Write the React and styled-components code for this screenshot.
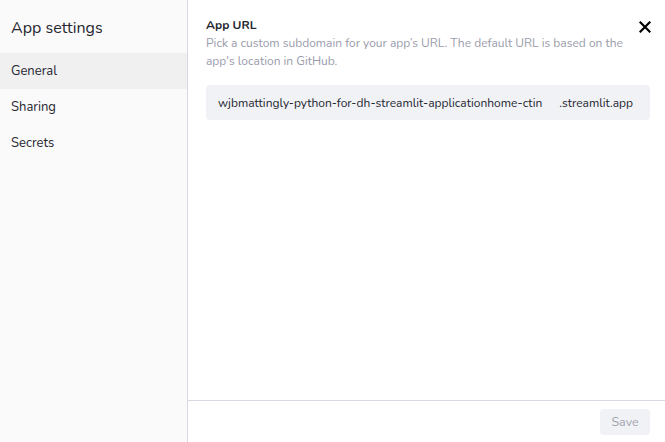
import React from "react";
import styled, { createGlobalStyle } from "styled-components";

const GlobalStyle = createGlobalStyle`
  html, body { margin: 0; padding: 0; background: #ffffff; }
  body { font-family: "Nunito", "Lato", "Open Sans", sans-serif; }
`;

const Shell = styled.div`
  display: flex;
  width: 665px;
  height: 442px;
  overflow: hidden;
`;

const Sidebar = styled.aside`
  width: 187px;
  flex-shrink: 0;
  background: #fafafa;
  border-right: 1px solid #d9d9e3;
  display: flex;
  flex-direction: column;
`;

const SideTitle = styled.div`
  font-size: 16px;
  color: #262730;
  padding: 17px 0 0 11px;
  height: 36px;
  box-sizing: border-box;
  margin-bottom: 17px;
`;

const NavItem = styled.div`
  height: 36px;
  display: flex;
  align-items: center;
  padding-left: 11px;
  font-size: 13px;
  color: #262730;
  background: ${(p) => (p.$active ? "#f0f0f0" : "transparent")};
`;

const Main = styled.section`
  flex: 1;
  display: flex;
  flex-direction: column;
  position: relative;
`;

const Content = styled.div`
  flex: 1;
  padding: 17px 15px 0 18px;
`;

const Label = styled.div`
  font-size: 12px;
  font-weight: 700;
  color: #262730;
  line-height: 16px;
`;

const Help = styled.div`
  font-size: 12px;
  color: #9a9cab;
  line-height: 17.5px;
  margin-top: 2px;
  width: 430px;
`;

const UrlField = styled.div`
  margin-top: 15px;
  height: 35px;
  background: #f0f2f6;
  border-radius: 4px;
  display: flex;
  align-items: center;
  padding: 0 17px 0 12px;
  font-size: 12px;
  color: #262730;
`;

const Subdomain = styled.span`
  flex: 1;
`;

const CloseBtn = styled.button`
  position: absolute;
  top: 21px;
  right: 12px;
  border: none;
  background: none;
  padding: 0;
  width: 14px;
  height: 14px;
  display: flex;
`;

const Footer = styled.div`
  height: 41px;
  border-top: 1px solid #d9d9e3;
  display: flex;
  justify-content: flex-end;
  align-items: center;
  padding-right: 15px;
`;

const SaveBtn = styled.button`
  width: 50px;
  height: 26px;
  background: #f0f2f6;
  border: none;
  border-radius: 4px;
  color: #a3a3ad;
  font-family: inherit;
  font-size: 12.5px;
`;

export default function App() {
  return (
    <>
      <GlobalStyle />
      <Shell>
        <Sidebar>
          <SideTitle>App settings</SideTitle>
          <NavItem $active>General</NavItem>
          <NavItem>Sharing</NavItem>
          <NavItem>Secrets</NavItem>
        </Sidebar>
        <Main>
          <CloseBtn aria-label="Close">
            <svg width="12" height="12" viewBox="0 0 12 12">
              <path d="M1.5 1.5 L10.5 10.5 M10.5 1.5 L1.5 10.5" stroke="#000" strokeWidth="2.2" strokeLinecap="square" />
            </svg>
          </CloseBtn>
          <Content>
            <Label>App URL</Label>
            <Help>
              Pick a custom subdomain for your app’s URL. The default URL is based on the app's location in GitHub.
            </Help>
            <UrlField>
              <Subdomain>wjbmattingly-python-for-dh-streamlit-applicationhome-ctin</Subdomain>
              <span>.streamlit.app</span>
            </UrlField>
          </Content>
          <Footer>
            <SaveBtn>Save</SaveBtn>
          </Footer>
        </Main>
      </Shell>
    </>
  );
}
